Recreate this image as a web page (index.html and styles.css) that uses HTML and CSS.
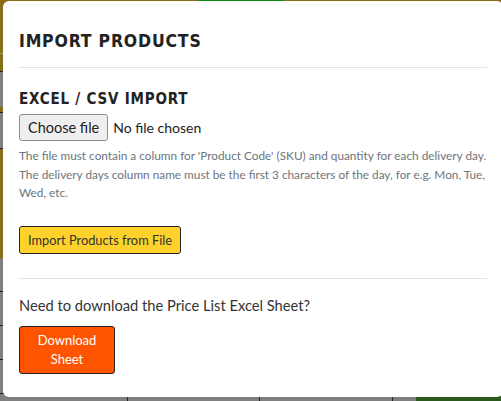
FILE: index.html
```html
<!DOCTYPE html>
<html lang="en">
<head>
    <meta charset="UTF-8">
    <meta name="viewport" content="width=device-width, initial-scale=1.0">
    <title>Import Products</title>
    <link rel="stylesheet" href="styles.css">
</head>
<body>
    <!-- dimmed page behind the modal -->
    <div class="backdrop">
        <div class="row olive top-row">
            <div class="cell w198"></div>
            <div class="cell green w85"></div>
            <div class="cell"></div>
        </div>
        <div class="row line-gray"></div>
        <div class="row olive h17"></div>
        <div class="row line-dark"></div>
        <div class="row gray h35"></div>
        <div class="row olive h5"></div>
        <div class="row line-dark"></div>
        <div class="row gray h35"></div>
        <div class="row line-dark"></div>
        <div class="row olive h109"></div>
        <div class="row gray body-row"></div>
        <div class="row gray body-row"></div>
        <div class="row gray body-row"></div>
        <div class="row gray body-row"></div>
        <div class="row gray last-row">
            <div class="cell w128 split"></div>
            <div class="cell w132 split"></div>
            <div class="cell w133 split"></div>
            <div class="cell w23"></div>
            <div class="cell dark-green"></div>
        </div>
    </div>

    <div class="modal">
        <div class="modal-header">
            <h1>Import Products</h1>
        </div>

        <div class="modal-section">
            <h2>Excel / CSV Import</h2>
            <div class="file-row">
                <label class="file-btn">Choose file<input type="file" hidden></label>
                <span class="file-name">No file chosen</span>
            </div>
            <p class="hint">
                The file must contain a column for 'Product Code' (SKU) and quantity for each delivery day.<br>
                The delivery days column name must be the first 3 characters of the day, for e.g. Mon, Tue,<br>
                Wed, etc.
            </p>
            <button class="btn btn-yellow">Import Products from File</button>
        </div>

        <div class="modal-section download">
            <p class="question">Need to download the Price List Excel Sheet?</p>
            <button class="btn btn-orange">Download Sheet</button>
        </div>
    </div>
</body>
</html>
```

FILE: styles.css
```css
body {
    margin: 0;
    background-color: #808080;
    font-family: Lato, "Open Sans", sans-serif;
    overflow: hidden;
}
.backdrop {
    height: 401px;
}
.row {
    display: flex;
}
.cell {
    flex: none;
    height: 100%;
}
.olive { background-color: #8a6d17; }
.gray { background-color: #808080; }
.green { background-color: #0d8a12; }
.dark-green { background-color: #2b5a1c; flex: 1; }
.top-row { height: 53px; }
.top-row .cell:last-child { flex: 1; }
.line-gray { height: 1px; background-color: #9a9a9a; }
.line-dark { height: 1px; background-color: #222; }
.h5 { height: 5px; }
.h17 { height: 17px; }
.h35 { height: 35px; }
.h109 { height: 109px; }
.body-row {
    height: 33px;
    border-bottom: 1px solid #222;
}
.last-row { height: 10px; }
.w23 { width: 23px; }
.w85 { width: 85px; }
.w128 { width: 128px; }
.w132 { width: 132px; }
.w133 { width: 133px; }
.w198 { width: 198px; }
.split { box-sizing: border-box; border-right: 1px solid #222; }

.modal {
    position: fixed;
    left: 3px;
    top: 1px;
    width: 500px;
    height: 396px;
    box-sizing: border-box;
    padding: 0 16px;
    background: white;
    border-radius: 6px;
}
.modal-header {
    padding: 29px 0 15px;
    border-bottom: 1px solid #e3e3e3;
}
h1, h2 {
    margin: 0;
    font-family: "Liberation Sans Narrow", "DejaVu Sans Condensed", sans-serif;
    font-weight: bold;
    text-transform: uppercase;
    color: #222;
}
h1 {
    font-size: 17.5px;
    line-height: 22px;
    letter-spacing: 0.8px;
}
h2 {
    font-size: 15px;
    line-height: 20px;
    letter-spacing: 0.8px;
}
.modal-section {
    padding: 21px 0 24px;
    border-bottom: 1px solid #e3e3e3;
}
.file-row {
    display: flex;
    align-items: center;
    gap: 5px;
    margin-top: 5px;
    font-size: 14px;
    color: #222;
}
.file-btn {
    padding: 4px 8px;
    font-size: 14.5px;
    line-height: 17px;
    background-color: #efefef;
    border: 1px solid #8f8f8f;
    border-radius: 3px;
    cursor: pointer;
}
.hint {
    margin: 6px 0 23px;
    font-size: 11.8px;
    line-height: 18.5px;
    color: #6c757d;
}
.btn {
    display: block;
    font-family: inherit;
    border: 1px solid #222;
    border-radius: 3px;
    cursor: pointer;
}
.btn-yellow {
    background-color: #fed22b;
    color: #333;
    font-size: 12.8px;
    line-height: 16px;
    padding: 5px 8px;
}
.download {
    padding: 16px 0 0;
    border-bottom: none;
}
.question {
    margin: 0 0 10px;
    font-size: 14.7px;
    line-height: 21px;
    color: #333;
}
.btn-orange {
    width: 96px;
    background-color: #ff5400;
    color: white;
    font-size: 13px;
    line-height: 19px;
    padding: 4px 8px;
}
```
